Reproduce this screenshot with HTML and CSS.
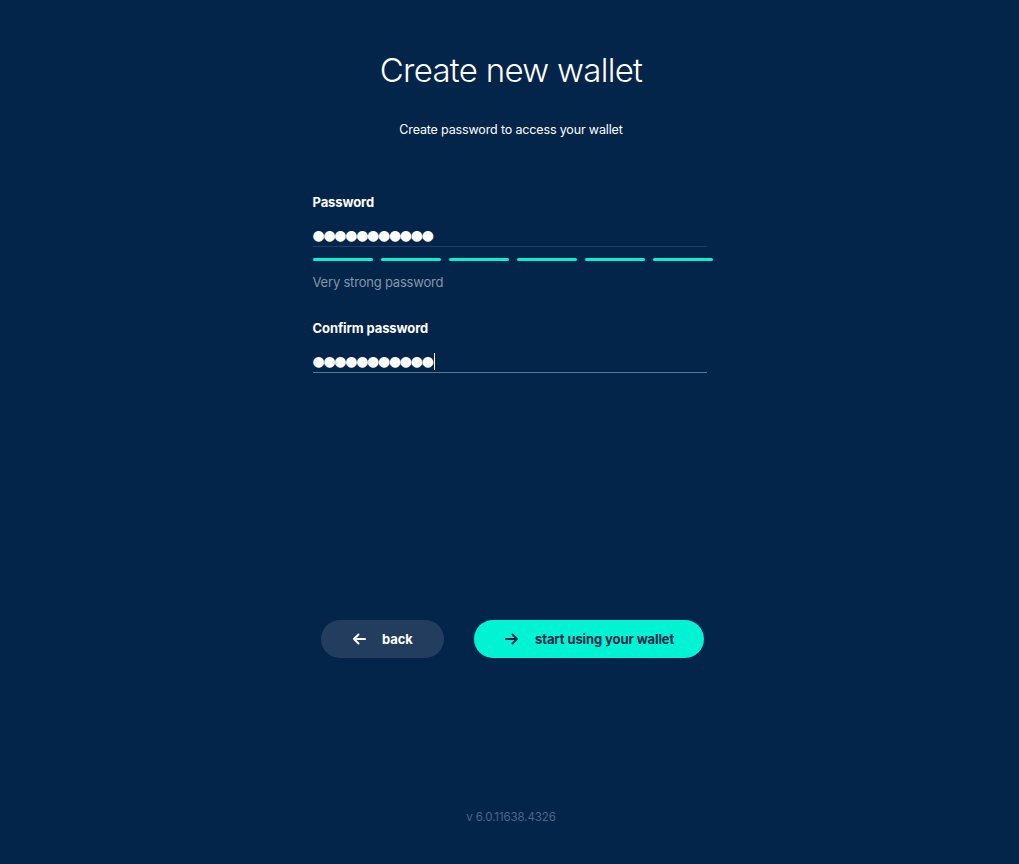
FILE: index.html
```html
<!DOCTYPE html>
<html lang="en">
<head>
<meta charset="utf-8">
<title>Create new wallet</title>
<link rel="stylesheet" href="styles.css">
</head>
<body>
<main class="page">
  <h1 class="title">Create new wallet</h1>
  <p class="subtitle">Create password to access your wallet</p>

  <form class="form">
    <div class="field">
      <label class="label">Password</label>
      <div class="input"><span class="dots">●●●●●●●●●●●</span></div>
      <div class="strength">
        <span class="bar"></span><span class="bar"></span><span class="bar"></span>
        <span class="bar"></span><span class="bar"></span><span class="bar"></span>
      </div>
      <div class="hint">Very strong password</div>
    </div>
    <div class="field field-confirm">
      <label class="label">Confirm password</label>
      <div class="input input-focus"><span class="dots">●●●●●●●●●●●</span><span class="caret"></span></div>
    </div>
  </form>

  <div class="actions">
    <button class="btn btn-back" type="button">
      <svg class="arrow" width="14" height="12" viewBox="0 0 14 12"><path d="M13 6H2M6.5 1.5L2 6l4.5 4.5" fill="none" stroke="currentColor" stroke-width="2" stroke-linecap="round" stroke-linejoin="round"/></svg>
      <span>back</span>
    </button>
    <button class="btn btn-primary" type="button">
      <svg class="arrow" width="14" height="12" viewBox="0 0 14 12"><path d="M1 6h11M7.5 1.5L12 6l-4.5 4.5" fill="none" stroke="currentColor" stroke-width="2" stroke-linecap="round" stroke-linejoin="round"/></svg>
      <span>start using your wallet</span>
    </button>
  </div>

  <footer class="version">v 6.0.11638.4326</footer>
</main>
</body>
</html>
```

FILE: styles.css
```css
html, body {
  margin: 0;
  padding: 0;
  background: #03254a;
  height: 100%;
}
body {
  font-family: Inter, "Noto Sans", sans-serif;
  color: #ffffff;
}
.page {
  display: flex;
  flex-direction: column;
  align-items: center;
  height: 864px;
}
.title {
  margin: 49px 0 0;
  padding-left: 3px;
  font-size: 33px;
  font-weight: 300;
  line-height: 42px;
  letter-spacing: -0.7px;
}
.subtitle {
  margin: 30px 0 0;
  padding-left: 3px;
  font-size: 12.5px;
  line-height: 18px;
  letter-spacing: -0.15px;
  color: #ffffff;
}
.form {
  width: 394px;
  margin: 54px 0 0 0;
  display: flex;
  flex-direction: column;
}
.field-confirm {
  margin-top: 28px;
}
.label {
  display: block;
  font-size: 13px;
  font-weight: 700;
  line-height: 18px;
  letter-spacing: -0.1px;
}
.input {
  margin-top: 14px;
  height: 20px;
  border-bottom: 1px solid #1e3e63;
  display: flex;
  align-items: center;
  padding-bottom: 1px;
}
.input-focus {
  border-bottom-color: #5c7591;
}
.dots {
  font-family: "DejaVu Sans", sans-serif;
  font-size: 14px;
  letter-spacing: -1.3px;
  line-height: 20px;
  color: #fff;
}
.caret {
  width: 1px;
  height: 17px;
  background: #fff;
  margin-left: 1px;
}
.strength {
  display: flex;
  gap: 8px;
  margin-top: 11px;
  width: 400px;
}
.bar {
  width: 60px;
  height: 3px;
  border-radius: 2px;
  background: #00f2d3;
}
.hint {
  margin-top: 12px;
  font-size: 13px;
  line-height: 18px;
  letter-spacing: -0.2px;
  color: #8495a8;
}
.actions {
  margin-top: 247px;
  margin-left: 6px;
  display: flex;
  gap: 30px;
}
.btn {
  height: 38px;
  border: 0;
  border-radius: 19px;
  font-family: Inter, "Noto Sans", sans-serif;
  font-size: 13px;
  font-weight: 700;
  letter-spacing: -0.1px;
  display: flex;
  align-items: center;
  justify-content: flex-start;
  gap: 16px;
  padding: 0 0 0 31px;
  cursor: pointer;
}
.btn-back {
  width: 123px;
  background: #233d5e;
  color: #fff;
}
.btn-primary {
  width: 230px;
  background: #00f4d4;
  color: #04264a;
}
.arrow {
  display: block;
}
.version {
  margin-top: auto;
  margin-bottom: 40px;
  padding-left: 3px;
  font-size: 11.5px;
  letter-spacing: -0.1px;
  color: #4b6685;
}
```
